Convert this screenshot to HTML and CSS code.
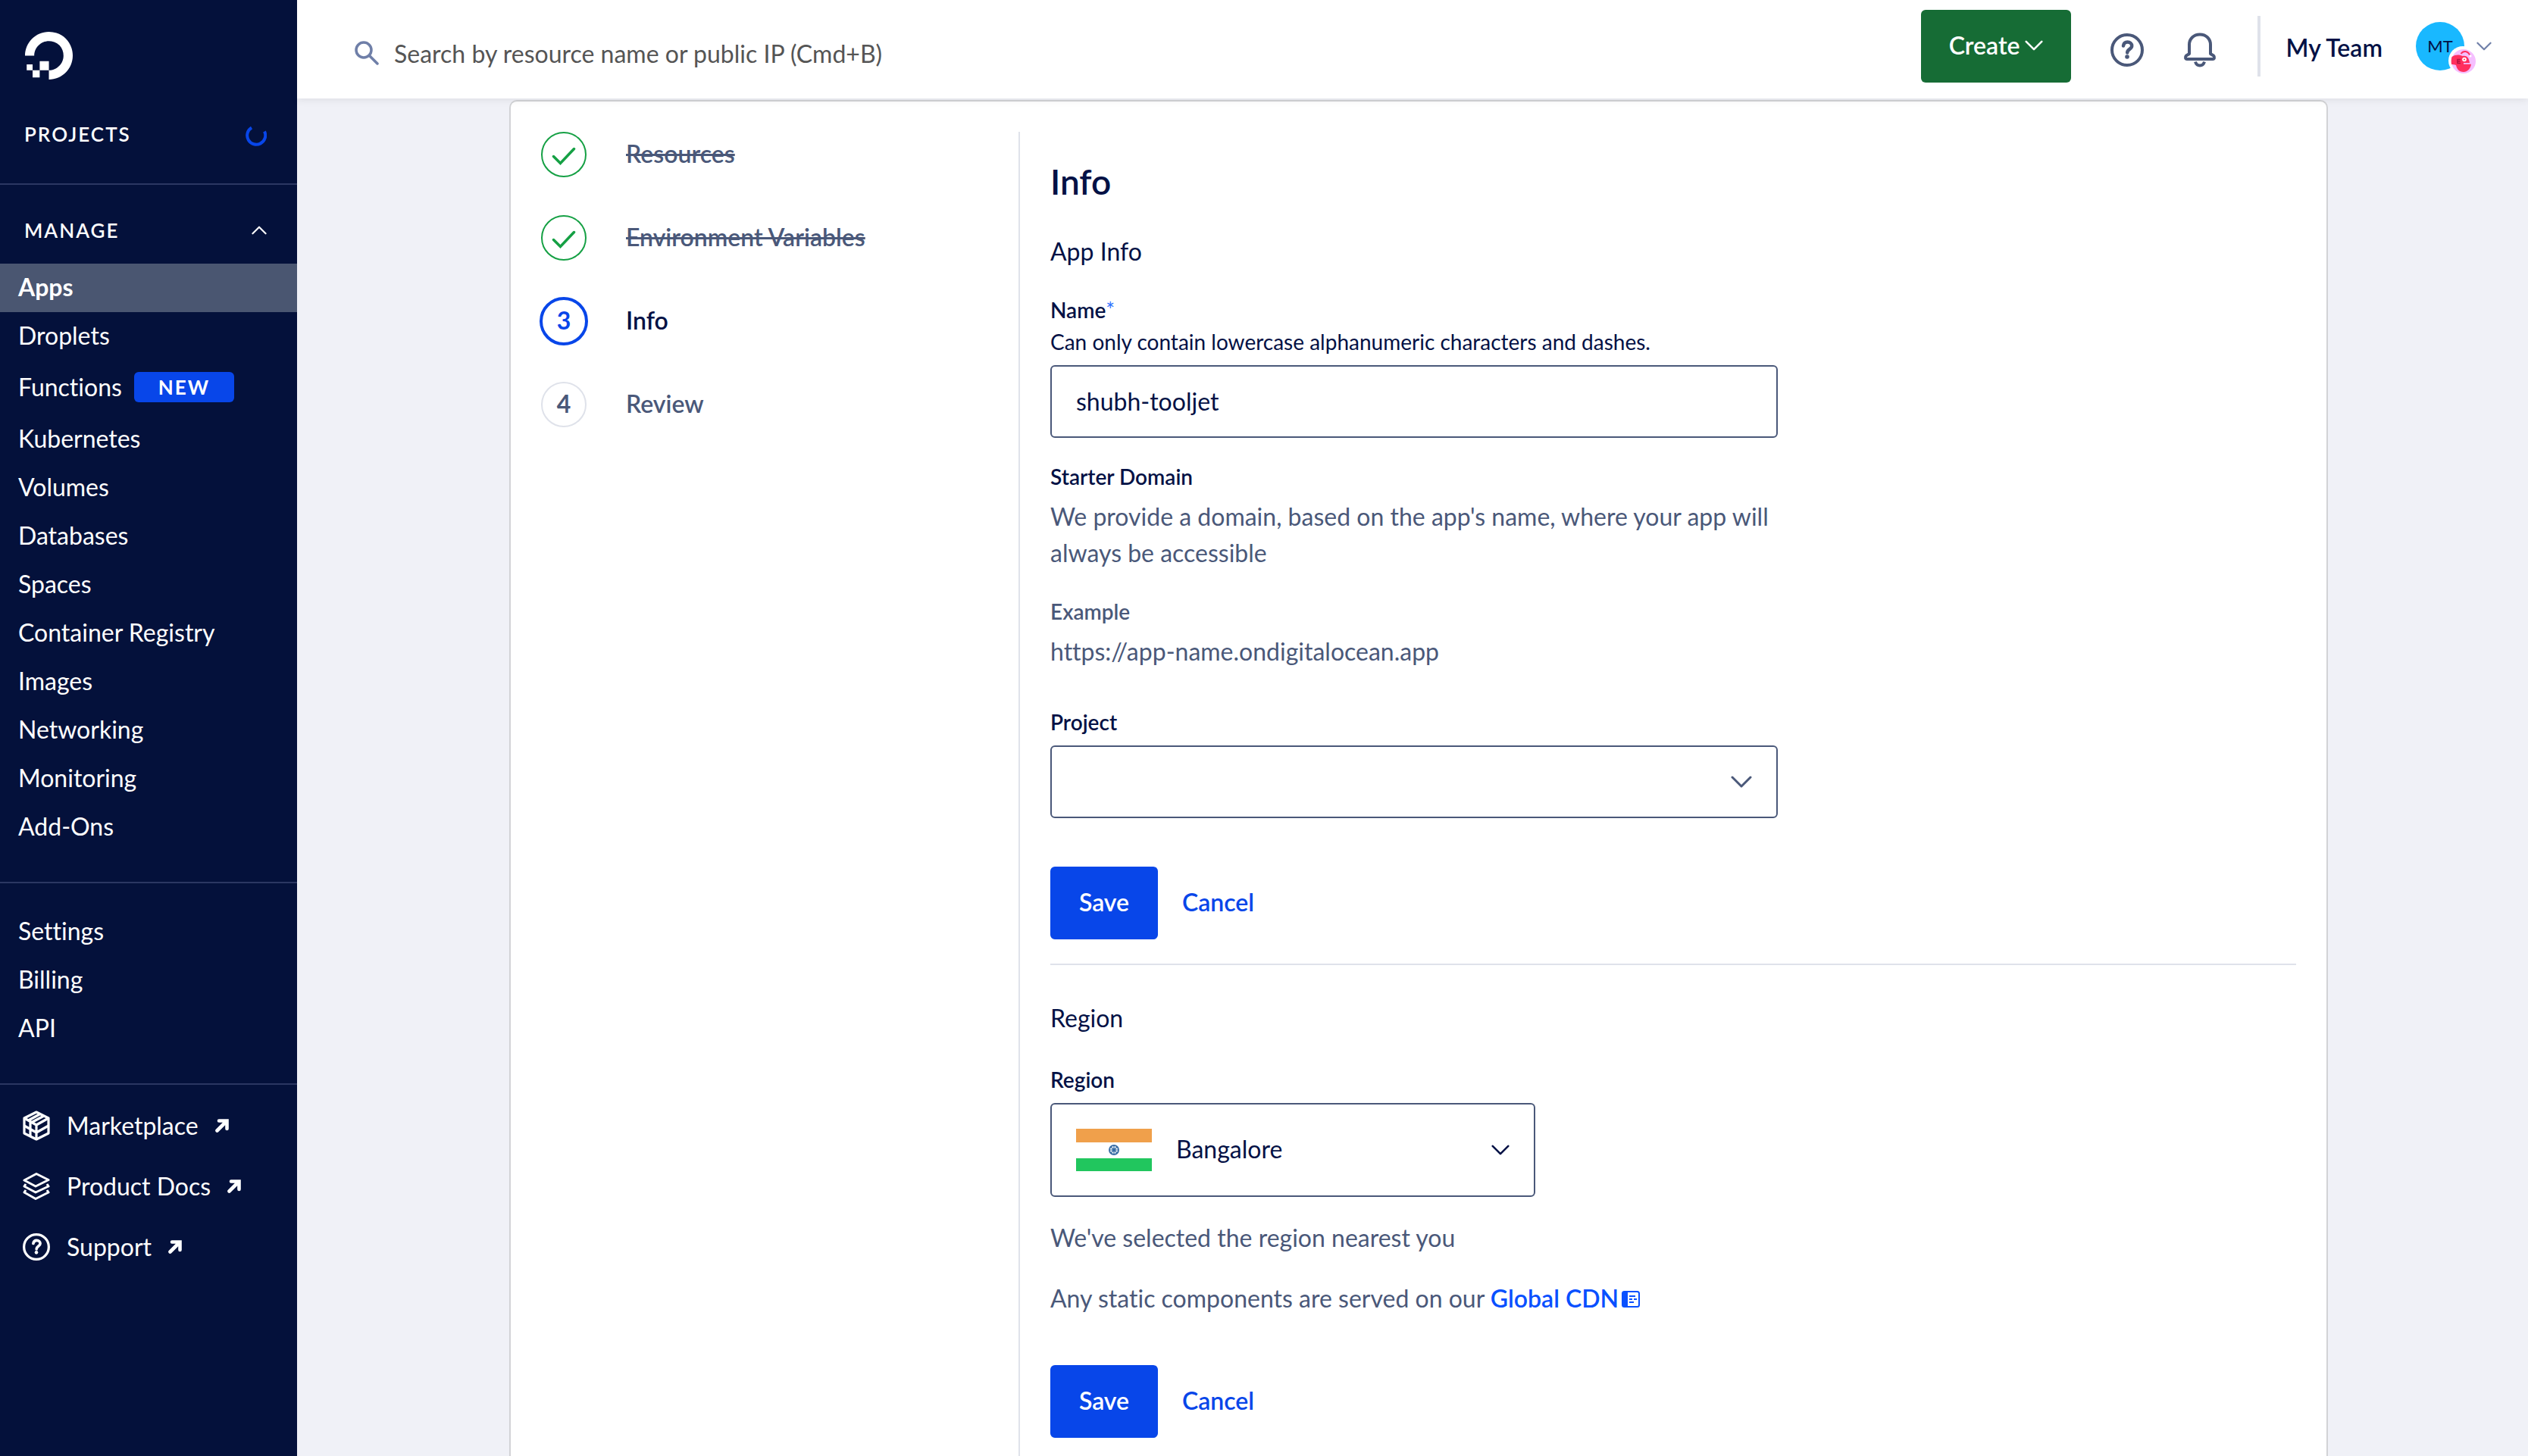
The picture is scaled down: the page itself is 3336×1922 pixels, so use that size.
FILE: index.html
```html
<!DOCTYPE html>
<html lang="en">
<head>
<meta charset="utf-8">
<meta name="viewport" content="width=device-width, initial-scale=1">
<title>Create App - Info</title>
<link rel="stylesheet" href="styles.css">
</head>
<body>
<svg class="sprite" aria-hidden="true">
  <symbol id="chevron" viewBox="0 0 28 16"><path d="M2 2l12 12L26 2" fill="none" stroke="currentColor" stroke-width="3" stroke-linecap="round" stroke-linejoin="round"/></symbol>
  <symbol id="arrow" viewBox="0 0 18 18"><path d="M5 2.500h10.500V13M15 3L2.500 15.500" fill="none" stroke="currentColor" stroke-width="4.600" stroke-linecap="round"/></symbol>
  <symbol id="help" viewBox="0 0 44 44"><g fill="none" stroke="currentColor" stroke-linecap="round"><circle cx="22" cy="22" r="20" stroke-width="4"/><path d="M17 16.500c.5-3.500 3-5 5.500-5 3.300 0 5.700 2 5.700 5 0 4.500-6 4.300-6 9" stroke-width="4.500"/></g><circle cx="22" cy="31" r="2.800" fill="currentColor"/></symbol>
  <symbol id="check" viewBox="0 0 32 24"><path d="M2.500 12.500l9 9L29.500 2.500" fill="none" stroke="currentColor" stroke-width="3.500" stroke-linecap="round"/></symbol>
</svg>
<div class="app">
  <aside class="sidebar">
    <a class="logo" href="#" aria-label="DigitalOcean">
      <svg viewBox="0 0 24 24"><path fill="currentColor" d="M12.04 0C5.408-.02.005 5.370.005 11.992h4.638c0-4.923 4.882-8.731 10.064-6.855a6.950 6.950 0 014.147 4.148c1.889 5.177-1.924 10.055-6.840 10.064v-4.610H7.391v4.623h4.610V24c7.860 0 13.967-7.588 11.397-15.830-1.115-3.590-3.985-6.446-7.577-7.575A12.800 12.800 0 0012.039 0zM7.390 19.362H3.828v3.564H7.390zm-3.563 0v-2.978H.85v2.978z"/></svg>
    </a>
    <div class="side-head projects">
      <span>PROJECTS</span>
      <svg class="spinner" viewBox="0 0 28 28"><path d="M8 3.500A12 12 0 1 0 25 8.500" fill="none" stroke="currentColor" stroke-width="4"/></svg>
    </div>
    <button class="side-head manage" type="button">
      <span>MANAGE</span>
      <svg class="fold"><use href="#chevron"/></svg>
    </button>
    <nav>
      <ul class="nav">
        <li><a class="current" href="#">Apps</a></li>
        <li><a href="#">Droplets</a></li>
        <li><a class="tall" href="#">Functions <span class="new">NEW</span></a></li>
        <li><a href="#">Kubernetes</a></li>
        <li><a href="#">Volumes</a></li>
        <li><a href="#">Databases</a></li>
        <li><a href="#">Spaces</a></li>
        <li><a href="#">Container Registry</a></li>
        <li><a href="#">Images</a></li>
        <li><a href="#">Networking</a></li>
        <li><a href="#">Monitoring</a></li>
        <li><a href="#">Add-Ons</a></li>
      </ul>
      <ul class="nav ruled">
        <li><a href="#">Settings</a></li>
        <li><a href="#">Billing</a></li>
        <li><a href="#">API</a></li>
      </ul>
      <ul class="links">
        <li><a href="#">
          <svg class="glyph" viewBox="0 0 36 40"><g fill="none" stroke="currentColor" stroke-width="3.200" stroke-linejoin="round"><path d="M18 2l16 8v20l-16 8L2 30V10z"/><path d="M2 10l16 9 16-9M18 19v19M2 20l16 9 16-9M10 15v18M12 15.500L28 7M7.500 13L23 4.500"/></g></svg>
          <span>Marketplace</span><svg class="out"><use href="#arrow"/></svg></a></li>
        <li><a href="#">
          <svg class="glyph" viewBox="0 0 36 40"><g fill="none" stroke="currentColor" stroke-width="3" stroke-linejoin="round"><path d="M18 3.500l16 8-17 8.500L2 12z"/><path d="M4 17l-2 3 15 8 17-8-2-3M4 25l-2 3 15 8.500L34 28l-2-3"/></g></svg>
          <span>Product Docs</span><svg class="out"><use href="#arrow"/></svg></a></li>
        <li><a href="#">
          <svg class="glyph"><use href="#help"/></svg>
          <span>Support</span><svg class="out"><use href="#arrow"/></svg></a></li>
      </ul>
    </nav>
  </aside>

  <div class="page">
    <header class="topbar">
      <form class="search" role="search">
        <label for="search" aria-label="Search"><svg viewBox="0 0 32 32"><g fill="none" stroke="currentColor" stroke-width="3.500" stroke-linecap="round"><circle cx="12" cy="12" r="10"/><path d="M19.500 19.500L30 30"/></g></svg></label>
        <input id="search" type="text" placeholder="Search by resource name or public IP (Cmd+B)">
      </form>
      <div class="tools">
        <button class="create" type="button"><span>Create</span><svg><use href="#chevron"/></svg></button>
        <div class="icons">
          <button type="button" aria-label="Help"><svg><use href="#help"/></svg></button>
          <button type="button" aria-label="Notifications"><svg viewBox="0 0 44 46"><g fill="none" stroke="currentColor" stroke-width="4" stroke-linejoin="round"><path d="M8 28V16C8 8 14 2.500 22 2.500S36 8 36 16v12l4 2.500c2 2 1 4.500-1 4.500H5c-2 0-3-2.500-1-4.500z"/><path d="M16 38.500c1 3.500 3 5 6 5s5-1.500 6-5"/></g></svg></button>
        </div>
        <button class="account" type="button">
          <span class="team">My Team</span>
          <span class="avatar">MT
            <svg class="badge" viewBox="0 0 38 38"><circle cx="19" cy="19" r="19" fill="#fff"/><circle cx="20" cy="20" r="16" fill="#f5bfff"/><path d="M4.500 14C9 10.500 15 11 19 13c5-1 8 2 9 9h-8v1.800h10C29 30 25 34 20 34c-6 0-9-4-10-9-2-1-4-1-6-1-.5-3-.5-7 .5-10z" fill="#ff2f5e"/><path d="M16.500 10c3-4.500 9-4 11.500 1.500" fill="none" stroke="#ff2f5e" stroke-width="2"/><circle cx="29" cy="13" r="1.500" fill="#fff"/><circle cx="21" cy="17.500" r="2.800" fill="#fff"/><circle cx="21" cy="17.500" r="1" fill="#ff2f5e"/><path d="M16 17.500h-4v5h4M12 20h3.500" fill="none" stroke="#b5123f" stroke-width="1.600"/></svg>
          </span>
          <svg class="more"><use href="#chevron"/></svg>
        </button>
      </div>
    </header>

    <main class="card">
      <ol class="steps">
        <li class="done"><span class="dot"><svg><use href="#check"/></svg></span><span class="label">Resources</span></li>
        <li class="done"><span class="dot"><svg><use href="#check"/></svg></span><span class="label">Environment Variables</span></li>
        <li class="active"><span class="dot">3</span><span class="label">Info</span></li>
        <li><span class="dot">4</span><span class="label">Review</span></li>
      </ol>
      <div class="content">
        <h1>Info</h1>
        <form class="section">
          <h2>App Info</h2>
          <div class="field">
            <label for="name">Name<span class="required">*</span></label>
            <p class="hint">Can only contain lowercase alphanumeric characters and dashes.</p>
            <input class="control" id="name" type="text" value="shubh-tooljet">
          </div>
          <div class="domain">
            <h3>Starter Domain</h3>
            <p>We provide a domain, based on the app's name, where your app will always be accessible</p>
          </div>
          <div class="example">
            <h3 class="muted">Example</h3>
            <p>https://app-name.ondigitalocean.app</p>
          </div>
          <div class="field">
            <label for="project">Project</label>
            <div class="picker">
              <select class="control" id="project"><option></option></select>
              <svg class="caret"><use href="#chevron"/></svg>
            </div>
          </div>
          <div class="actions">
            <button class="save" type="button">Save</button>
            <button class="cancel" type="button">Cancel</button>
          </div>
        </form>
        <form class="section region">
          <h2>Region</h2>
          <div class="field">
            <label for="region">Region</label>
            <div class="picker narrow">
              <select class="control" id="region"><option>Bangalore</option></select>
              <svg class="flag" viewBox="0 0 100 56"><path fill="#f0a04b" d="M0 0h100v18H0z"/><path fill="#fff" d="M0 18h100v21H0z"/><path fill="#21c65e" d="M0 39h100v17H0z"/><g fill="none" stroke="#3a6ea5"><circle cx="50" cy="28" r="6" stroke-width="2"/><path d="M50 22v12M44 28h12M46 24l8 8M54 24l-8 8" stroke-width="1.200"/></g><circle cx="50" cy="28" r="2.500" fill="#3a6ea5"/></svg>
              <svg class="caret dark"><use href="#chevron"/></svg>
            </div>
          </div>
          <div class="notes">
            <p>We've selected the region nearest you</p>
            <p>Any static components are served on our <a href="#">Global CDN<svg viewBox="0 0 24 22"><rect x="1" y="1" width="22" height="20" rx="2.500" fill="none" stroke="currentColor" stroke-width="2"/><path d="M1 2h7v18H1z" fill="currentColor"/><path d="M10 7h8M10 11h4M16 11h4M10 15h6" stroke="currentColor" stroke-width="2"/></svg></a></p>
          </div>
          <div class="actions">
            <button class="save" type="button">Save</button>
            <button class="cancel" type="button">Cancel</button>
          </div>
        </form>
      </div>
    </main>
  </div>
</div>
</body>
</html>
```
FILE: styles.css
```css
:root {
  --navy: #04113b;
  --ink: #031145;
  --slate: #4a5879;
  --blue: #0846e9;
  --green: #15a044;
  --line: #dfe2ea;
}

* { box-sizing: border-box; }

body {
  margin: 0;
  background: #f0f1f7;
  color: var(--ink);
  font: 400 32px/48px Lato, "Liberation Sans", sans-serif;
  font-variant-ligatures: none;
}

h1, h2, h3, p, ul, ol { margin: 0; padding: 0; }
ul, ol { list-style: none; }
a { color: inherit; text-decoration: none; }
svg { display: block; flex: none; }
button, input, select { margin: 0; padding: 0; border: 0; background: none; color: inherit; font: inherit; }
button { cursor: pointer; }

.sprite { position: absolute; width: 0; height: 0; }

.app { display: flex; min-height: 100vh; }

/* Sidebar */
.sidebar { flex: none; width: 392px; background: var(--navy); color: #fff; }
.logo { display: block; padding: 42px 33px 0; }
.logo svg { width: 63px; height: 63px; }

.side-head {
  display: flex;
  justify-content: space-between;
  width: 100%;
  padding: 0 40px 0 32px;
  font-size: 26px;
  font-weight: 600;
  letter-spacing: 2px;
}
.projects { height: 139px; padding-top: 48px; border-bottom: 2px solid #2b3762; }
.spinner { width: 28px; height: 28px; margin-top: 12px; color: var(--blue); }
.manage { align-items: center; height: 104px; padding-top: 16px; }
.fold { width: 20px; height: 12px; transform: rotate(180deg); }

.nav a { display: flex; align-items: center; gap: 16px; height: 64px; padding: 0 24px 2px; }
.nav .tall { height: 72px; }
.nav .current { background: #4a5671; font-weight: 700; }
.new {
  width: 132px;
  border-radius: 6px;
  background: var(--blue);
  font-size: 26px;
  font-weight: 700;
  line-height: 40px;
  letter-spacing: 2px;
  text-align: center;
}
.ruled { margin: 40px 0; padding-top: 32px; border-top: 2px solid #2b3762; }
.links { padding-top: 14px; border-top: 2px solid #2b3762; }
.links a { display: flex; align-items: center; height: 80px; padding: 0 30px; }
.glyph { width: 36px; height: 40px; margin-right: 22px; }
.out { width: 18px; height: 18px; margin-left: 22px; }

/* Top bar */
.page { display: flex; flex: 1; flex-direction: column; min-width: 0; }
.topbar {
  position: sticky;
  top: 0;
  z-index: 1;
  display: flex;
  justify-content: space-between;
  height: 130px;
  padding: 0 48px 0 76px;
  background: #fff;
  box-shadow: 0 2px 10px rgba(0, 0, 0, .08);
}
.search { display: flex; flex: 1; align-items: center; gap: 20px; padding-top: 10px; color: #6f7fa8; }
.search svg { width: 32px; height: 32px; }
.search input { flex: 1; height: 64px; outline: 0; }
.search input::placeholder { color: #555; opacity: 1; }
.tools { display: flex; align-items: center; height: 122px; }
.create {
  display: flex;
  align-items: center;
  justify-content: center;
  gap: 6px;
  width: 198px;
  height: 96px;
  padding-bottom: 2px;
  border-radius: 6px;
  background: #166c35;
  color: #fff;
  font-weight: 600;
}
.create svg { width: 24px; height: 14px; }
.icons { display: flex; gap: 52px; padding: 10px 54px 0 52px; color: var(--slate); }
.icons svg { width: 44px; height: 46px; }
.account {
  display: flex;
  align-items: center;
  height: 80px;
  padding-left: 34px;
  border-left: 4px solid var(--line);
}
.team { padding-top: 4px; font-weight: 600; }
.avatar {
  position: relative;
  width: 64px;
  height: 64px;
  margin: 0 16px 0 44px;
  border-radius: 50%;
  background: #19b8ff;
  font-size: 22px;
  line-height: 64px;
  text-align: center;
}
.badge { position: absolute; right: -17px; bottom: -6px; width: 38px; height: 38px; }
.more { width: 20px; height: 12px; color: #6f7fa8; }

/* Wizard card */
.card {
  display: flex;
  flex: 1;
  margin: 2px 264px 0 280px;
  padding: 40px 40px 0 38px;
  border: 2px solid #d2d3d6;
  border-bottom: 0;
  border-radius: 10px 10px 0 0;
  background: #fff;
}
.steps { display: flex; flex: none; flex-direction: column; gap: 50px; width: 632px; }
.steps li { display: flex; align-items: center; gap: 50px; height: 60px; color: var(--slate); font-weight: 600; }
.dot {
  display: flex;
  align-items: center;
  justify-content: center;
  width: 60px;
  height: 60px;
  margin: 0 2px;
  padding-bottom: 2px;
  border: 2px solid var(--line);
  border-radius: 50%;
  font-weight: 700;
}
.label { padding-bottom: 2px; }
.done .dot { padding: 4px 0 0; border-color: var(--green); color: var(--green); }
.done .dot svg { width: 32px; height: 24px; }
.done .label { text-decoration: line-through; }
.steps .active { color: var(--ink); }
.active .dot { width: 64px; height: 64px; margin: 0; border: 4px solid var(--blue); color: var(--blue); }

.content { flex: 1; padding: 38px 0 22px 40px; border-left: 2px solid var(--line); }
h1 { margin-bottom: 40px; font-size: 46px; font-weight: 600; line-height: 56px; }
h2 { font: inherit; }
h3, .field label, .hint { display: block; font-size: 28px; line-height: 42px; }
h3, .field label { font-weight: 600; }
.required { color: #2f72ff; font-weight: 400; }
.section h2 { margin-bottom: 32px; }
.region { margin-top: 32px; padding-top: 46px; border-top: 2px solid var(--line); }
.region h2 { margin-bottom: 36px; }
.field, .domain { max-width: 960px; }
.control {
  display: block;
  width: 100%;
  height: 96px;
  margin-top: 10px;
  padding: 0 32px 2px;
  border: 2px solid var(--slate);
  border-radius: 6px;
  background: #fff;
  appearance: none;
}
.domain { margin-top: 30px; }
.example { margin: 32px 0 48px; }
.section p:not(.hint) { color: var(--slate); }
.domain p, .example p { margin-top: 8px; }
.muted { color: var(--slate); }

.picker { position: relative; }
.caret { position: absolute; top: 40px; right: 34px; width: 28px; height: 16px; color: var(--slate); pointer-events: none; }
.narrow { max-width: 640px; }
.narrow .control { height: 124px; padding-left: 164px; }
.narrow .dark { top: 54px; width: 24px; color: var(--ink); }
.flag { position: absolute; top: 34px; left: 34px; width: 100px; height: 56px; pointer-events: none; }

.notes { display: grid; gap: 32px; margin-top: 30px; }
.notes a { color: #0950ff; font-weight: 600; }
.notes a svg { display: inline-block; width: 24px; height: 22px; margin-left: 4px; }

.actions { display: flex; gap: 32px; margin-top: 64px; font-weight: 600; }
.save { width: 142px; height: 96px; padding-bottom: 2px; border-radius: 6px; background: var(--blue); color: #fff; }
.cancel { padding-bottom: 2px; color: var(--blue); }
```
